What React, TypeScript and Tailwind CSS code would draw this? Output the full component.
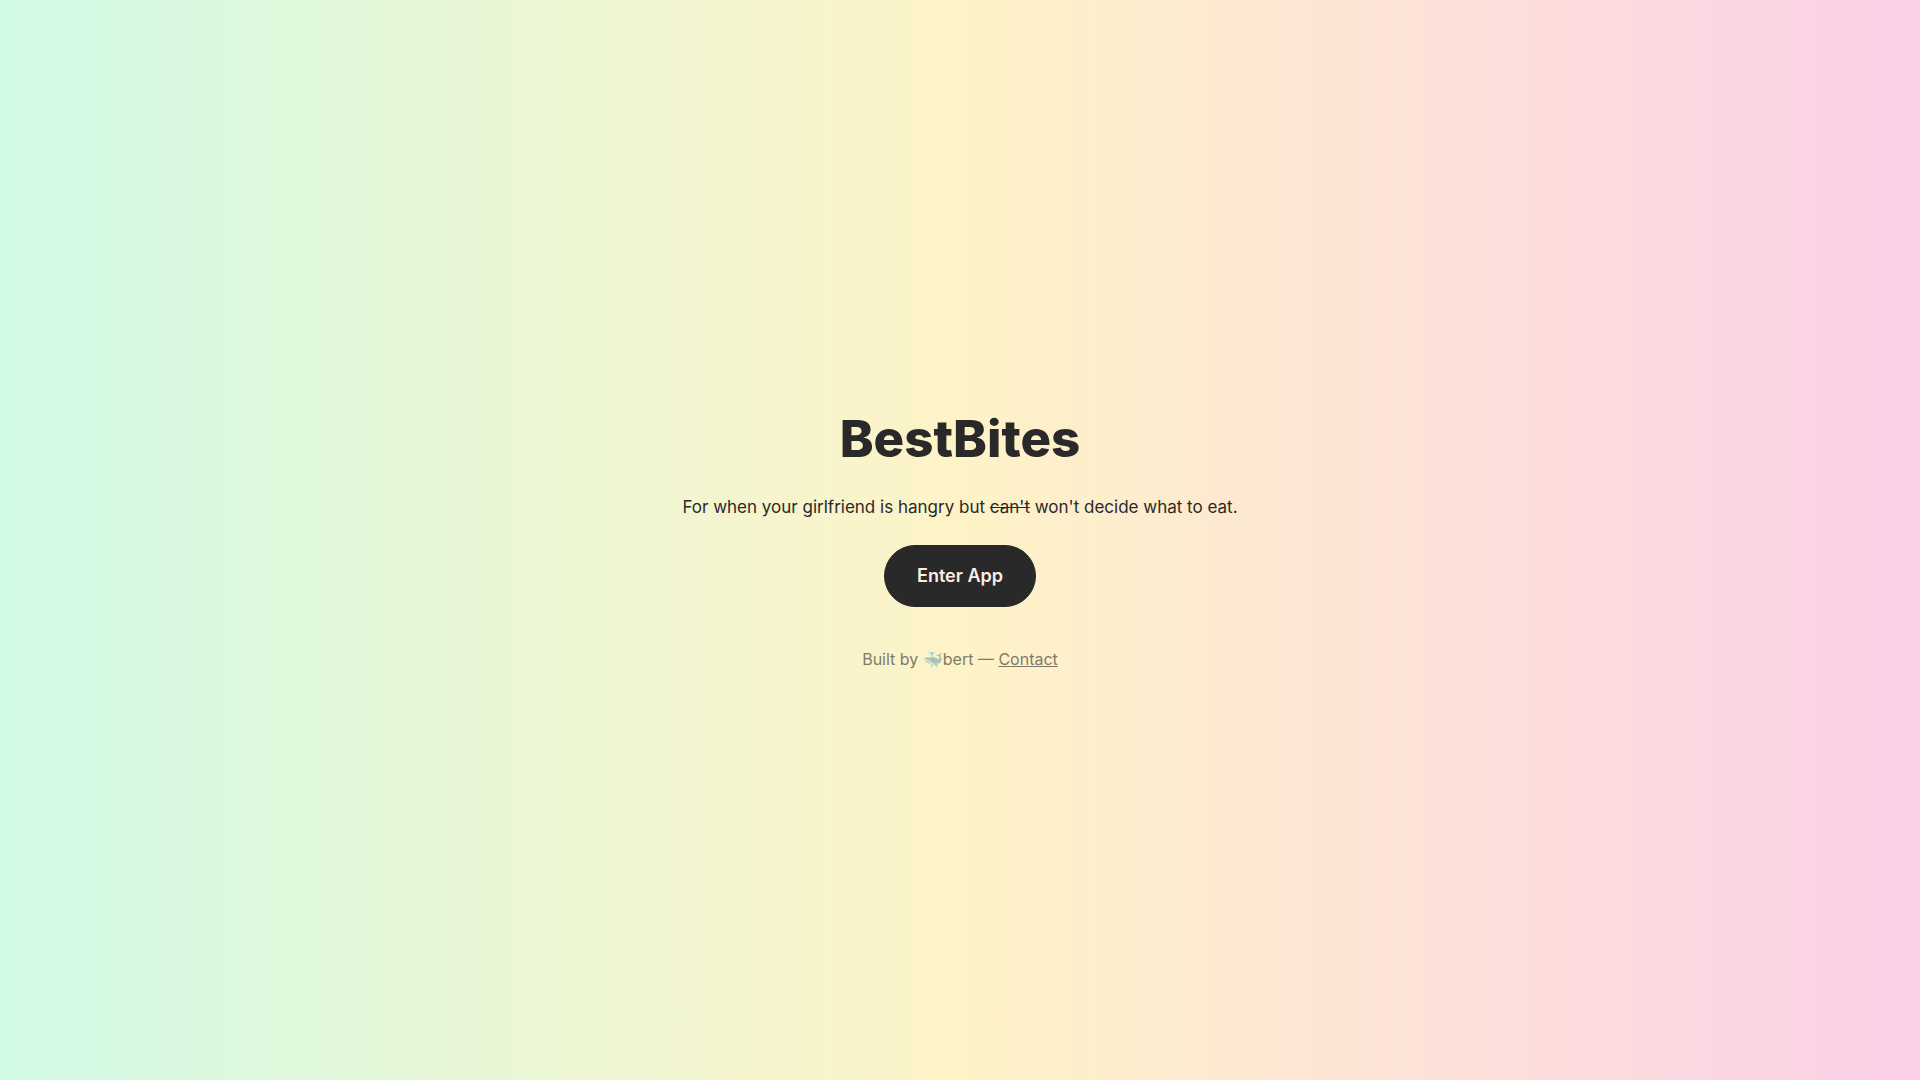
export default function App() {
  return (
    <main className="flex min-h-screen flex-col items-center justify-center bg-linear-to-r from-[#d1fae5] via-[#fef3c7] to-[#fbcfe8] px-6 text-center font-['Inter',sans-serif] text-[#292929]">

      <h1 className="mb-6 text-[51px] leading-[60px] font-extrabold">BestBites</h1>

      <p className="mb-6 text-[17px] leading-7">
        For when your girlfriend is hangry but <s>can't</s> won't decide what to eat.
      </p>

      <button type="button" className="rounded-full border border-[#292929] bg-[#292929] px-8 py-4 text-lg font-semibold text-[#ffede3]">
        Enter App
      </button>

      <p className="mt-10 text-base opacity-60">
        Built by 🐳bert — <a href="#contact" className="underline">Contact</a>
      </p>

    </main>
  );
}
